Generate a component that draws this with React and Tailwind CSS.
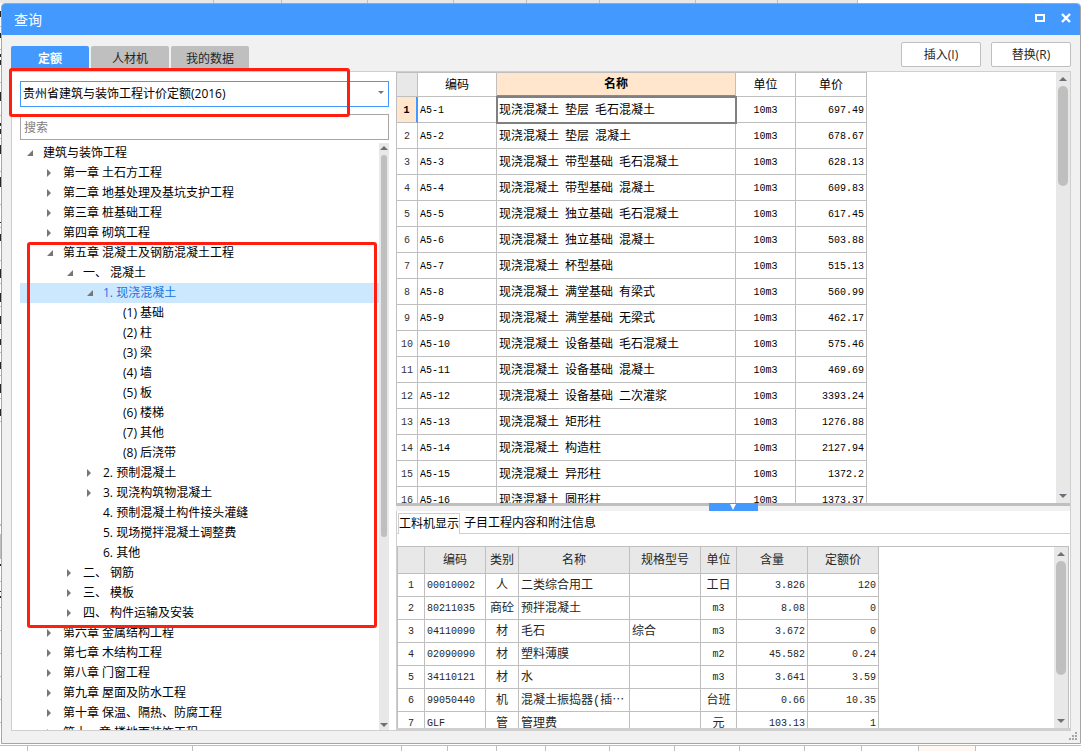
import React, { useState } from 'react';

const tabs = ['定额', '人材机', '我的数据'];

// state: open / closed / leaf
const tree = [
  { level: 0, state: 'open', text: '建筑与装饰工程' },
  { level: 1, state: 'closed', text: '第一章 土石方工程' },
  { level: 1, state: 'closed', text: '第二章 地基处理及基坑支护工程' },
  { level: 1, state: 'closed', text: '第三章 桩基础工程' },
  { level: 1, state: 'closed', text: '第四章 砌筑工程' },
  { level: 1, state: 'open', text: '第五章 混凝土及钢筋混凝土工程' },
  { level: 2, state: 'open', text: '一、 混凝土' },
  { level: 3, state: 'open', text: '1. 现浇混凝土' },
  { level: 4, state: 'leaf', text: '(1) 基础' },
  { level: 4, state: 'leaf', text: '(2) 柱' },
  { level: 4, state: 'leaf', text: '(3) 梁' },
  { level: 4, state: 'leaf', text: '(4) 墙' },
  { level: 4, state: 'leaf', text: '(5) 板' },
  { level: 4, state: 'leaf', text: '(6) 楼梯' },
  { level: 4, state: 'leaf', text: '(7) 其他' },
  { level: 4, state: 'leaf', text: '(8) 后浇带' },
  { level: 3, state: 'closed', text: '2. 预制混凝土' },
  { level: 3, state: 'closed', text: '3. 现浇构筑物混凝土' },
  { level: 3, state: 'leaf', text: '4. 预制混凝土构件接头灌缝' },
  { level: 3, state: 'leaf', text: '5. 现场搅拌混凝土调整费' },
  { level: 3, state: 'leaf', text: '6. 其他' },
  { level: 2, state: 'closed', text: '二、 钢筋' },
  { level: 2, state: 'closed', text: '三、 模板' },
  { level: 2, state: 'closed', text: '四、 构件运输及安装' },
  { level: 1, state: 'closed', text: '第六章 金属结构工程' },
  { level: 1, state: 'closed', text: '第七章 木结构工程' },
  { level: 1, state: 'closed', text: '第八章 门窗工程' },
  { level: 1, state: 'closed', text: '第九章 屋面及防水工程' },
  { level: 1, state: 'closed', text: '第十章 保温、隔热、防腐工程' },
  { level: 1, state: 'closed', text: '第十一章 楼地面装饰工程' },
];

const indent = ['pl-[6px]', 'pl-[26px]', 'pl-[46px]', 'pl-[66px]', 'pl-[86px]'];

const quotas = [
  ['A5-1', '现浇混凝土 垫层 毛石混凝土', '10m3', '697.49'],
  ['A5-2', '现浇混凝土 垫层 混凝土', '10m3', '678.67'],
  ['A5-3', '现浇混凝土 带型基础 毛石混凝土', '10m3', '628.13'],
  ['A5-4', '现浇混凝土 带型基础 混凝土', '10m3', '609.83'],
  ['A5-5', '现浇混凝土 独立基础 毛石混凝土', '10m3', '617.45'],
  ['A5-6', '现浇混凝土 独立基础 混凝土', '10m3', '503.88'],
  ['A5-7', '现浇混凝土 杯型基础', '10m3', '515.13'],
  ['A5-8', '现浇混凝土 满堂基础 有梁式', '10m3', '560.99'],
  ['A5-9', '现浇混凝土 满堂基础 无梁式', '10m3', '462.17'],
  ['A5-10', '现浇混凝土 设备基础 毛石混凝土', '10m3', '575.46'],
  ['A5-11', '现浇混凝土 设备基础 混凝土', '10m3', '469.69'],
  ['A5-12', '现浇混凝土 设备基础 二次灌浆', '10m3', '3393.24'],
  ['A5-13', '现浇混凝土 矩形柱', '10m3', '1276.88'],
  ['A5-14', '现浇混凝土 构造柱', '10m3', '2127.94'],
  ['A5-15', '现浇混凝土 异形柱', '10m3', '1372.2'],
  ['A5-16', '现浇混凝土 圆形柱', '10m3', '1373.37'],
];

const resources = [
  ['00010002', '人', '二类综合用工', '', '工日', '3.826', '120'],
  ['80211035', '商砼', '预拌混凝土', '', 'm3', '8.08', '0'],
  ['04110090', '材', '毛石', '综合', 'm3', '3.672', '0'],
  ['02090090', '材', '塑料薄膜', '', 'm2', '45.582', '0.24'],
  ['34110121', '材', '水', '', 'm3', '3.641', '3.59'],
  ['99050440', '机', '混凝土振捣器(插⋯', '', '台班', '0.66', '10.35'],
  ['GLF', '管', '管理费', '', '元', '103.13', '1'],
];

const Arrow = ({ down }) => (
  <svg className="h-[4px] w-[8px] shrink-0" viewBox="0 0 8 4" fill="#6e6e78">
    {down ? <path d="M0 0h8L4 4z" /> : <path d="M4 0l4 4H0z" />}
  </svg>
);

const ScrollBar = ({ className, thumb }) => (
  <div className={`flex shrink-0 flex-col items-center bg-[#e8e8e8] ${className}`}>
    <Arrow />
    <div className={`shrink-0 rounded-full bg-[#bfbfbf] ${thumb}`} />
    <div className="flex-1" />
    <Arrow down />
  </div>
);

const TreeMark = ({ state }) => (
  <svg className="h-[8px] w-[8px] shrink-0" viewBox="0 0 8 8" fill="#767676">
    {state === 'open' && <path d="M7 1v6H1z" />}
    {state === 'closed' && <path d="M1 0l4 4-4 4z" />}
  </svg>
);

const LeftPanel = () => {
  const [selected, setSelected] = useState(7);
  const [query, setQuery] = useState('');

  return (
    <div className="relative flex w-[385px] shrink-0 flex-col border-t border-b border-l border-[#cfcfcf] bg-white pt-2 pr-[7px] pl-2">
      <div className="relative shrink-0">
        <select
          aria-label="定额库"
          className="h-[26px] w-full appearance-none border border-[#4499ff] bg-white px-[2px] text-xs text-black outline-none"
        >
          <option>贵州省建筑与装饰工程计价定额(2016)</option>
        </select>
        <svg className="pointer-events-none absolute top-[11px] right-[5px] h-[3px] w-[6px]" viewBox="0 0 6 3" fill="#767676">
          <path d="M0 0h6L3 3z" />
        </svg>
      </div>
      <input
        type="text"
        aria-label="搜索"
        placeholder="搜索"
        value={query}
        onChange={(e) => setQuery(e.target.value)}
        className="mt-[7px] h-[26px] w-full shrink-0 border border-[#a6a6a6] px-[3px] text-xs outline-none placeholder:text-[#808080]"
      />

      <div className="mt-[3px] flex min-h-0 flex-1">
        <div className="relative min-w-0 flex-1">
          <ul className="h-full overflow-hidden">
            {tree.map((node, i) => (
              <li key={node.text}>
                <button
                  type="button"
                  onClick={() => setSelected(i)}
                  className={`flex h-5 w-full items-center gap-[9px] text-left text-xs whitespace-nowrap ${indent[node.level]} ${
                    i === selected ? 'bg-[#cce8ff] text-[#1a75e0]' : 'text-black'
                  }`}
                >
                  <TreeMark state={node.state} />
                  {node.text}
                </button>
              </li>
            ))}
          </ul>
          <div className="pointer-events-none absolute top-[99px] right-[2px] left-[7px] h-[386px] rounded-[3px] border-3 border-[#ff1e10]" />
        </div>
        <ScrollBar className="w-[10px] py-[3px]" thumb="mt-[5px] h-[382px] w-[6px]" />
      </div>
      <div className="pointer-events-none absolute -top-[4px] right-[46px] -left-[3px] h-[49px] rounded-[3px] border-3 border-[#ff1e10]" />
    </div>
  );
};

const cell = 'border-r border-b border-[#bfbfbf] px-0 pt-[2px] pb-0';

const QuotaTable = () => (
  <table className="w-[471px] shrink-0 table-fixed border-separate border-spacing-0 self-start border-t border-l border-[#bfbfbf] font-['Liberation_Mono','Noto_Sans_CJK_SC',monospace] text-xs leading-4 text-black">
    <colgroup>
      <col className="w-[21px]" />
      <col className="w-[79px]" />
      <col className="w-[239px]" />
      <col className="w-[60px]" />
      <col className="w-[71px]" />
    </colgroup>
    <thead>
      <tr className="h-6">
        <th className={`${cell} bg-[#e8e8e8]`} />
        <th className={`${cell} font-normal`}>编码</th>
        <th className="border-r border-b-2 border-r-[#bfbfbf] border-b-[#4499ff] bg-[#ffe6cc] px-0 pt-[2px] pb-0 font-bold">名称</th>
        <th className={`${cell} font-normal`}>单位</th>
        <th className={`${cell} font-normal`}>单价</th>
      </tr>
    </thead>
    <tbody>
      {quotas.map(([code, name, unit, price], i) => (
        <tr key={code} className="h-[26px]">
          {i === 0 ? (
            <th className="border-r-2 border-b border-r-[#4499ff] border-b-[#bfbfbf] bg-[#ffe6cc] px-0 pt-[2px] pb-0 text-[10px] font-bold">1</th>
          ) : (
            <th className={`${cell} text-[10px] font-normal text-[#333333]`}>{i + 1}</th>
          )}
          <td className={`${cell} pl-[2px] text-[10px]`}>{code}</td>
          <td className={`${cell} pl-[2px] ${i === 0 ? 'outline-2 -outline-offset-1 outline-[#808080]' : ''}`}>
            <div className="flex gap-[6px] whitespace-nowrap">
              {name.split(' ').map((part) => (
                <span key={part}>{part}</span>
              ))}
            </div>
          </td>
          <td className={`${cell} text-center text-[10px]`}>{unit}</td>
          <td className={`${cell} pr-[2px] text-right text-[10px]`}>{price}</td>
        </tr>
      ))}
    </tbody>
  </table>
);

const ResourceTable = () => (
  <table className="w-[482px] shrink-0 table-fixed border-separate border-spacing-0 self-start border-l border-[#bfbfbf] font-['Liberation_Mono','Noto_Sans_CJK_SC',monospace] text-xs leading-4 text-[#262626]">
    <colgroup>
      <col className="w-[27px]" />
      <col className="w-[61px]" />
      <col className="w-[33px]" />
      <col className="w-[111px]" />
      <col className="w-[71px]" />
      <col className="w-[36px]" />
      <col className="w-[71px]" />
      <col className="w-[71px]" />
    </colgroup>
    <thead>
      <tr className="h-[27px] bg-[#e8e8e8]">
        {['', '编码', '类别', '名称', '规格型号', '单位', '含量', '定额价'].map((title) => (
          <th key={title} className={`${cell} font-normal`}>{title}</th>
        ))}
      </tr>
    </thead>
    <tbody>
      {resources.map(([code, kind, name, spec, unit, amount, price], i) => (
        <tr key={code} className="h-[23px]">
          <th className={`${cell} text-[10px] font-normal`}>{i + 1}</th>
          <td className={`${cell} pl-[2px] text-[10px]`}>{code}</td>
          <td className={`${cell} text-center`}>{kind}</td>
          <td className={`${cell} overflow-hidden pl-[2px] whitespace-nowrap`}>{name}</td>
          <td className={`${cell} pl-[2px]`}>{spec}</td>
          <td className={`${cell} text-center ${unit.startsWith('m') ? 'text-[10px]' : ''}`}>{unit}</td>
          <td className={`${cell} pr-[2px] text-right text-[10px]`}>{amount}</td>
          <td className={`${cell} pr-[2px] text-right text-[10px]`}>{price}</td>
        </tr>
      ))}
    </tbody>
  </table>
);

const RightPanel = () => (
  <div className="flex min-w-0 flex-1 flex-col border-t border-r border-[#cfcfcf] bg-white">
    <div className="flex min-h-0 flex-1 justify-between overflow-hidden">
      <QuotaTable />
      <ScrollBar className="w-[14px] py-[5px]" thumb="mt-[5px] h-[100px] w-[10px]" />
    </div>

    {/* splitter */}
    <div className="flex h-2 shrink-0 justify-center border-t-3 border-[#bfbfbf] bg-[#f1f1f1]">
      <button type="button" aria-label="折叠" className="-mt-[3px] flex h-2 w-[49px] items-center justify-center bg-[#4499ff]">
        <svg className="h-[6px] w-[6px]" viewBox="0 0 6 6" fill="#ffffff">
          <path d="M0 0h6L3 6z" />
        </svg>
      </button>
    </div>

    <div className="flex h-[220px] shrink-0 flex-col border-b-3 border-l border-[#cfcfcf]">
      <div className="flex h-[23px] shrink-0 items-end border-b border-[#cfcfcf] pl-[1px] text-xs text-black">
        <button type="button" className="-mb-[1px] h-[21px] border border-b-0 border-[#cfcfcf] bg-white">工料机显示</button>
        <button type="button" className="h-5 px-1">子目工程内容和附注信息</button>
      </div>
      <div className="mt-3 mr-[1px] flex min-h-0 flex-1 justify-between overflow-hidden border-t border-r border-[#bfbfbf]">
        <ResourceTable />
        <ScrollBar className="w-[14px] py-[5px]" thumb="mt-[5px] h-[114px] w-[10px]" />
      </div>
    </div>
  </div>
);

// Edge of the sheet that lies behind the dialog
const SheetEdge = ({ className, widths, cellClass, lastClass }) => (
  <div className={`flex shrink-0 overflow-hidden ${className}`}>
    {widths.map((w, i) => (
      <div
        key={i}
        className={`shrink-0 border-r border-[#bfbfbf] ${i === widths.length - 1 ? lastClass : cellClass}`}
        style={{ width: w }}
      />
    ))}
  </div>
);

const SheetSide = () => (
  <svg className="h-full w-[1px] shrink-0" viewBox="0 0 1 741" preserveAspectRatio="xMinYMin slice">
    <path
      fill="#bfbfbf"
      d="M0 23h1v1H0zM0 46h1v1H0zM0 79h1v1H0zM0 112h1v1H0zM0 135h1v1H0zM0 168h1v1H0zM0 201h1v1H0zM0 224h1v1H0zM0 257h1v1H0zM0 280h1v1H0zM0 303h1v1H0zM0 326h1v1H0zM0 349h1v1H0zM0 372h1v1H0zM0 395h1v1H0zM0 418h1v1H0zM0 521h1v2H0zM0 531h1v25H0zM0 578h1v1H0zM0 604h1v1H0zM0 627h1v1H0zM0 650h1v1H0zM0 673h1v1H0zM0 696h1v1H0zM0 719h1v1H0z"
    />
    <path
      fill="#262626"
      d="M0 8h1v6H0zM0 30h1v5H0zM0 51h1v3H0zM0 57h1v5H0zM0 89h1v9H0zM0 120h1v3H0zM0 126h1v5H0zM0 142h1v9H0zM0 174h1v10H0zM0 219h1v1H0zM0 231h1v7H0zM0 266h1v9H0zM0 290h1v9H0zM0 313h1v8H0zM0 336h1v6H0zM0 359h1v7H0zM0 381h1v9H0zM0 406h1v7H0zM0 561h1v2H0zM0 588h1v1H0zM0 593h1v2H0z"
    />
  </svg>
);

const App = () => {
  const [tab, setTab] = useState(0);

  return (
    <div className="flex h-screen flex-col overflow-hidden bg-white font-['Open_Sans','Noto_Sans_CJK_SC',sans-serif]">
      <SheetEdge className="h-[3px]" widths={[214, 68, 86, 86, 73, 73, 96, 82, 80]} cellClass="bg-[#e8e8e8]" lastClass="bg-[#e8e8e8]" />

      <div className="flex min-h-0 flex-1">
        <SheetSide />
        <div className="flex min-w-0 flex-1 flex-col overflow-hidden rounded-t-[4px] border border-[#a6a6a6] bg-[#f1f1f1]">
          <div className="flex h-[31px] shrink-0 items-center justify-between bg-[#4499ff] pt-[1px] pr-[9px] pl-3 text-white">
            <h1 className="text-sm">查询</h1>
            <div className="flex gap-4 pb-1">
              <button type="button" aria-label="最大化">
                <svg className="h-[10px] w-[10px]" viewBox="0 0 10 10" fill="none" stroke="#ffffff" strokeWidth="2">
                  <path d="M1 2h8v6H1z" />
                </svg>
              </button>
              <button type="button" aria-label="关闭">
                <svg className="h-[10px] w-[10px]" viewBox="0 0 10 10" fill="none" stroke="#ffffff" strokeWidth="2.4">
                  <path d="M1 1l8 8M9 1L1 9" />
                </svg>
              </button>
            </div>
          </div>

          <div className="flex h-9 shrink-0 items-end justify-between px-[9px] text-xs">
            <div className="flex gap-[2px]">
              {tabs.map((name, i) => (
                <button
                  key={name}
                  type="button"
                  onClick={() => setTab(i)}
                  className={`h-[25px] w-[78px] rounded-t-[2px] ${
                    i === tab ? 'bg-[#4499ff] font-bold text-white' : 'bg-[#bfbfbf] text-[#262626]'
                  }`}
                >
                  {name}
                </button>
              ))}
            </div>
            <div className="mb-1 flex gap-[10px] text-[#262626]">
              <button type="button" className="h-[25px] w-20 rounded-[2px] border border-[#bfbfbf] bg-white">插入(I)</button>
              <button type="button" className="h-[25px] w-20 rounded-[2px] border border-[#bfbfbf] bg-white">替换(R)</button>
            </div>
          </div>

          <div className="flex min-h-0 flex-1 px-[9px]">
            <LeftPanel />
            <RightPanel />
          </div>

          <div className="flex h-3 shrink-0 justify-end pr-[3px]">
            <svg className="h-[10px] w-[8px]" viewBox="0 0 8 10" fill="#a6a6a6">
              <path d="M6 1h2v2H6zM3 4h2v2H3zM6 4h2v2H6zM0 7h2v2H0zM3 7h2v2H3zM6 7h2v2H6z" />
            </svg>
          </div>
        </div>
      </div>

      <SheetEdge
        className="mt-[1px] h-[6px] border-t border-[#bfbfbf]"
        widths={[28, 165, 209, 46, 49, 49, 64, 65, 65, 65, 57, 57, 57]}
        cellClass="bg-white"
        lastClass="bg-[#fff8f4]"
      />
    </div>
  );
};

export default App;
